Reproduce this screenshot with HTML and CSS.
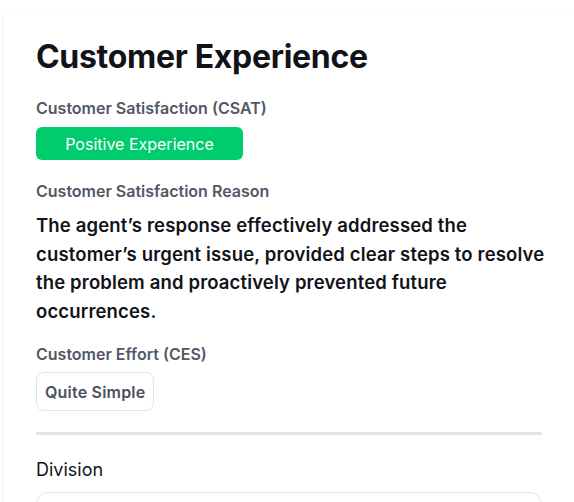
FILE: index.html
```html
<!DOCTYPE html>
<html>
<head>
<meta charset="utf-8">
<link rel="stylesheet" href="styles.css">
</head>
<body>
<div class="card">
  <h1 class="title">Customer Experience</h1>
  <div class="label">Customer Satisfaction (CSAT)</div>
  <div class="badge">Positive Experience</div>
  <div class="label">Customer Satisfaction Reason</div>
  <p class="reason">The agent’s response effectively addressed the customer’s urgent issue, provided clear steps to resolve the problem and proactively prevented future occurrences.</p>
  <div class="label label-ces">Customer Effort (CES)</div>
  <div class="chip">Quite Simple</div>
  <hr class="divider">
  <div class="field-label">Division</div>
  <div class="input"></div>
</div>
</body>
</html>
```

FILE: styles.css
```css
html, body {
  margin: 0;
  padding: 0;
  background: #ffffff;
}
body {
  font-family: "Inter", "Lato", sans-serif;
  color: #121318;
  height: 502px;
  overflow: hidden;
}
.card {
  margin-left: 2px;
  margin-top: 14px;
  border-left: 1px solid #f1f1f3;
  border-top: 1px solid #fbfbfc;
  padding: 22px 32px 0 33px;
  display: flex;
  flex-direction: column;
  align-items: flex-start;
}
.title {
  margin: 0;
  font-size: 32px;
  font-weight: 700;
  line-height: 40px;
  letter-spacing: -0.3px;
}
.label {
  font-size: 16px;
  font-weight: 600;
  color: #525866;
  margin-top: 21px;
  line-height: 20px;
}
.label-ces {
  margin-top: 19px;
}
.badge {
  margin-top: 9px;
  width: 207px;
  height: 33px;
  border-radius: 6px;
  background: #00cc6e;
  color: #ffffff;
  font-size: 16px;
  display: flex;
  align-items: center;
  justify-content: center;
}
.reason {
  margin: 10px 0 0;
  font-size: 18.5px;
  font-weight: 600;
  line-height: 28.5px;
  letter-spacing: 0.15px;
  width: 510px;
}
.chip {
  margin-top: 8px;
  height: 37px;
  padding: 0 8px;
  border: 1px solid #e3e4ea;
  border-radius: 8px;
  display: flex;
  align-items: center;
  font-size: 16px;
  font-weight: 600;
  letter-spacing: 0.2px;
  color: #4b505e;
}
.divider {
  align-self: stretch;
  margin: 21px 0 0;
  border: 0;
  height: 3px;
  background: #e4e5ec;
}
.field-label {
  margin-top: 23px;
  font-size: 18px;
  color: #121318;
  line-height: 24px;
}
.input {
  margin-top: 10px;
  align-self: stretch;
  height: 48px;
  border: 1px solid #e3e4ea;
  border-radius: 12px;
}
```
